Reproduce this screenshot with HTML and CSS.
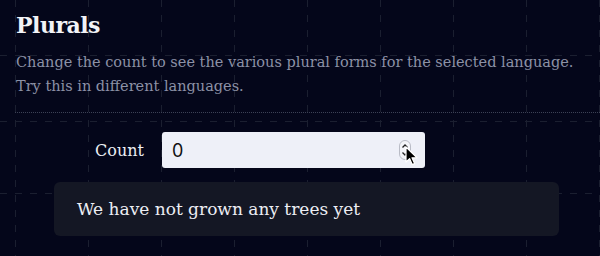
FILE: index.html
```html
<!DOCTYPE html>
<html lang="en">
  <head>
    <meta charset="UTF-8" />
    <meta name="viewport" content="width=device-width, initial-scale=1.0" />
    <title>Plurals</title>
    <link rel="stylesheet" href="styles.css">
  </head>
  <body>
    <!-- dashed background grid -->
    <svg class="grid" width="600" height="256" aria-hidden="true">
      <g stroke="#1b1f30" stroke-width="1" stroke-dasharray="7 8">
        <line x1="15.5" y1="0" x2="15.5" y2="256" />
        <line x1="88.5" y1="0" x2="88.5" y2="256" />
        <line x1="161.5" y1="0" x2="161.5" y2="256" />
        <line x1="234.5" y1="0" x2="234.5" y2="256" />
        <line x1="307.5" y1="0" x2="307.5" y2="256" />
        <line x1="380.5" y1="0" x2="380.5" y2="256" />
        <line x1="453.5" y1="0" x2="453.5" y2="256" />
        <line x1="526.5" y1="0" x2="526.5" y2="256" />
        <line x1="599.5" y1="0" x2="599.5" y2="256" />
        <line x1="0" y1="55.5" x2="600" y2="55.5" />
        <line x1="0" y1="121.5" x2="600" y2="121.5" />
        <line x1="0" y1="193.5" x2="600" y2="193.5" />
      </g>
    </svg>

    <main class="panel">
      <h2 class="title">Plurals</h2>
      <p class="desc">
        Change the count to see the various plural forms for the selected language.<br />
        Try this in different languages.
      </p>

      <hr class="divider" />

      <div class="field-row">
        <label for="count" class="field-label">Count</label>
        <div class="input-wrap">
          <input type="text" id="count" class="count-input" value="0" />
          <svg class="stepper" width="12" height="20" viewBox="0 0 12 20" aria-hidden="true">
            <rect x="0.5" y="0.5" width="11" height="19" rx="5.5" fill="#f4f5f9" stroke="#b9bcc6" />
            <path d="M3.5 7.5 L6 5 L8.5 7.5" fill="none" stroke="#222" stroke-width="1.3" />
            <path d="M3.5 12.5 L6 15 L8.5 12.5" fill="none" stroke="#222" stroke-width="1.3" />
          </svg>
          <svg class="cursor" width="14" height="21" viewBox="0 0 14 21" aria-hidden="true">
            <path d="M1 1 L1 16 L4.6 12.6 L7.2 18.6 L9.6 17.6 L7 11.8 L12 11.8 Z" fill="#000" stroke="#fff" stroke-width="1.2" stroke-linejoin="round" />
          </svg>
        </div>
      </div>

      <div class="message">We have not grown any trees yet</div>
    </main>
  </body>
</html>
```

FILE: styles.css
```css
body {
  margin: 0;
  background: #04061a;
  font-family: "DejaVu Serif", "Liberation Serif", serif;
  color: #eceef4;
  width: 600px;
  height: 256px;
  overflow: hidden;
  position: relative;
}

/* Grid sits behind everything */
.grid {
  position: absolute;
  top: 0;
  left: 0;
}

.panel {
  position: relative;
  padding: 0 16px;
}

.title {
  margin: 0;
  padding-top: 10px;
  font-size: 22px;
  line-height: 30px;
  font-weight: bold;
  letter-spacing: -0.5px;
  color: #f2f3f7;
}

.desc {
  margin: 10px 0 0;
  font-size: 14.5px;
  line-height: 24px;
  color: #8c91a6;
}

.divider {
  margin: 14px -16px 0 -1px;
  border: 0;
  border-top: 1px dotted #3c4155;
}

.field-row {
  display: flex;
  align-items: center;
  margin-top: 19px;
  padding-left: 79px;
}

.field-label {
  font-size: 16px;
  color: #eceef4;
  margin-right: 18px;
}

.input-wrap {
  position: relative;
}

.count-input {
  display: block;
  box-sizing: border-box;
  width: 263px;
  height: 36px;
  padding: 0 10px;
  border: 0;
  border-radius: 3px;
  background: #eef0f8;
  font-family: Inter, "Noto Sans", sans-serif;
  font-size: 18px;
  color: #111;
  outline: none;
}

.stepper {
  position: absolute;
  top: 8px;
  right: 14px;
}

.cursor {
  position: absolute;
  top: 14px;
  right: 6px;
}

.message {
  margin: 14px 25px 0 38px;
  padding: 16px 23px;
  height: 22px;
  background: #141724;
  border-radius: 6px;
  font-size: 17px;
  line-height: 22px;
  color: #eceef4;
}
```
